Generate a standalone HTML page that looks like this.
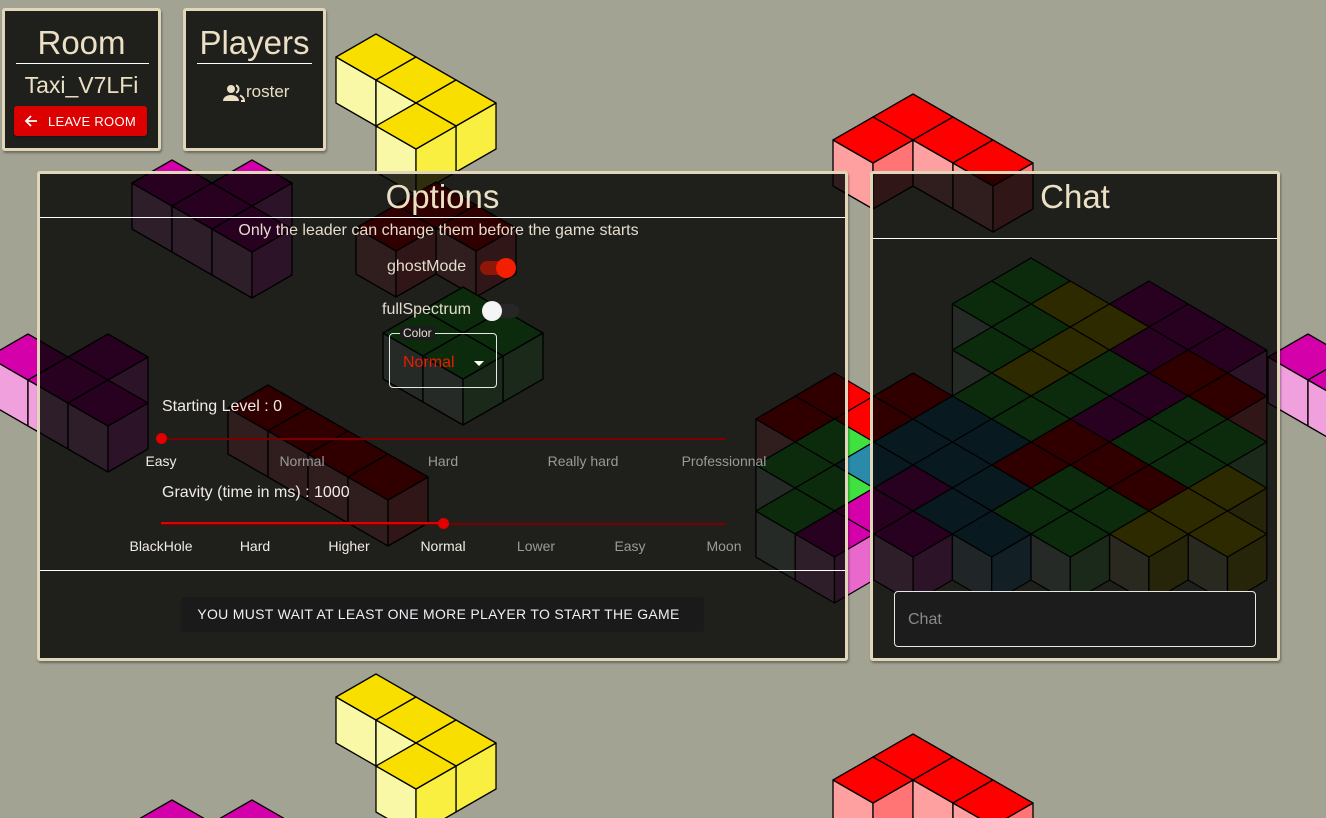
<!DOCTYPE html>
<html><head><meta charset="utf-8">
<style>
html,body{margin:0;padding:0;width:1326px;height:818px;overflow:hidden;background:#a3a393;font-family:"Liberation Sans",sans-serif;position:relative}
#bg{position:absolute;left:0;top:0;display:block}
.panel{position:absolute;box-sizing:border-box;background:rgba(0,0,0,0.81);border:3px solid #e1d5ba;border-radius:3px;box-shadow:1px 2px 2px rgba(0,0,0,.35);overflow:hidden}
.abs{position:absolute;white-space:nowrap}
.title{color:#ebdfc4;font-size:33px;text-align:center;left:0;right:0}
.hr{position:absolute;height:1px;background:#fff}
.lbl{color:#e4dccc;font-size:16px}
.mk{position:absolute;font-size:14px;transform:translateX(-50%);white-space:nowrap}
</style></head><body>
<svg id="bg" width="1326" height="818" xmlns="http://www.w3.org/2000/svg"></svg>

<!-- Room -->
<div class="panel" style="left:2px;top:8px;width:159px;height:143px">
  <div class="abs title" style="top:13px">Room</div>
  <div class="hr" style="left:11px;width:133px;top:52px"></div>
  <div class="abs" style="left:0;right:0;text-align:center;top:61px;font-size:23px;color:#ebdfc4">Taxi_V7LFi</div>
  <div class="abs" style="left:9px;top:95px;width:133px;height:30px;background:#dd0000;border-radius:3px;box-shadow:0 1px 2px rgba(0,0,0,.3)">
    <svg class="abs" style="left:10px;top:8px" width="14" height="14" viewBox="0 0 14 14"><path d="M13 7H2M7 2L2 7l5 5" stroke="#fff" stroke-width="1.8" fill="none"/></svg>
    <span class="abs" style="left:34px;top:8px;font-size:13px;color:#fff;letter-spacing:.3px">LEAVE ROOM</span>
  </div>
</div>

<!-- Players -->
<div class="panel" style="left:183px;top:8px;width:143px;height:143px">
  <div class="abs title" style="top:13px">Players</div>
  <div class="hr" style="left:11px;width:115px;top:52px"></div>
  <svg class="abs" style="left:36px;top:72px" width="24" height="20" viewBox="0 0 24 20"><circle cx="9" cy="6" r="4" fill="#ebdfc4"/><path d="M1 18c0-4 4-6 8-6s8 2 8 6z" fill="#ebdfc4"/><path d="M14 2.3a4 4 0 0 1 0 7.4M18 12.5c2.5 1 4 2.6 4 5.5h-3" stroke="#ebdfc4" stroke-width="2" fill="none"/></svg>
  <span class="abs" style="left:60px;top:71px;font-size:17px;color:#ebdfc4">roster</span>
</div>

<!-- Options -->
<div class="panel" style="left:37px;top:171px;width:811px;height:490px">
  <div class="abs title" style="top:4px">Options</div>
  <div class="hr" style="left:0;right:0;top:43px"></div>
  <div class="abs lbl" style="left:-8px;right:0;text-align:center;top:48px">Only the leader can change them before the game starts</div>
  <span class="abs lbl" style="left:347px;top:84px">ghostMode</span>
  <div class="abs" style="left:440px;top:87px;width:34px;height:14px;border-radius:7px;background:#8f1608"></div>
  <div class="abs" style="left:456px;top:84px;width:20px;height:20px;border-radius:50%;background:#f41e00"></div>
  <span class="abs lbl" style="left:342px;top:127px">fullSpectrum</span>
  <div class="abs" style="left:445px;top:130px;width:34px;height:14px;border-radius:7px;background:#262626"></div>
  <div class="abs" style="left:442px;top:127px;width:20px;height:20px;border-radius:50%;background:#f5f5f5"></div>
  <div class="abs" style="left:349px;top:159px;width:108px;height:55px;box-sizing:border-box;border:1px solid #e8e8e8;border-radius:4px"></div>
  <span class="abs" style="left:360px;top:152px;font-size:12px;color:#e8e0d0">
    <span style="background:rgb(28,28,28);padding:0 3px">Color</span></span>
  <span class="abs" style="left:363px;top:180px;font-size:16px;color:#e81c00">Normal</span>
  <div class="abs" style="left:434px;top:187px;width:0;height:0;border-left:5px solid transparent;border-right:5px solid transparent;border-top:5px solid #fff"></div>

  <span class="abs lbl" style="left:122px;top:224px;color:#f0ece4">Starting Level : 0</span>
  <div class="abs" style="left:121px;top:264px;width:565px;height:2px;background:#7a0000"></div>
  <div class="abs" style="left:116px;top:259px;width:11px;height:11px;border-radius:50%;background:#e00000"></div>
  <div class="mk" style="left:121px;top:279px;color:#f0ece4">Easy</div>
  <div class="mk" style="left:262px;top:279px;color:#9a9a9a">Normal</div>
  <div class="mk" style="left:403px;top:279px;color:#9a9a9a">Hard</div>
  <div class="mk" style="left:543px;top:279px;color:#9a9a9a">Really hard</div>
  <div class="mk" style="left:684px;top:279px;color:#9a9a9a">Professionnal</div>

  <span class="abs lbl" style="left:122px;top:310px;color:#f0ece4">Gravity (time in ms) : 1000</span>
  <div class="abs" style="left:121px;top:349px;width:565px;height:2px;background:#7a0000"></div>
  <div class="abs" style="left:121px;top:348px;width:282px;height:2px;background:#e00000"></div>
  <div class="abs" style="left:398px;top:344px;width:11px;height:11px;border-radius:50%;background:#e00000"></div>
  <div class="mk" style="left:121px;top:364px;color:#f0ece4">BlackHole</div>
  <div class="mk" style="left:215px;top:364px;color:#f0ece4">Hard</div>
  <div class="mk" style="left:309px;top:364px;color:#f0ece4">Higher</div>
  <div class="mk" style="left:403px;top:364px;color:#f0ece4">Normal</div>
  <div class="mk" style="left:496px;top:364px;color:#9a9a9a">Lower</div>
  <div class="mk" style="left:590px;top:364px;color:#9a9a9a">Easy</div>
  <div class="mk" style="left:684px;top:364px;color:#9a9a9a">Moon</div>

  <div class="hr" style="left:0;right:0;top:396px"></div>
  <div class="abs" style="left:141px;top:423px;width:523px;height:35px;background:#1a1a1a;border-radius:3px"></div>
  <span class="abs" style="left:137px;width:523px;text-align:center;top:432px;font-size:14px;color:#eef0f4;letter-spacing:.3px">YOU MUST WAIT AT LEAST ONE MORE PLAYER TO START THE GAME</span>
</div>

<!-- Chat -->
<div class="panel" style="left:870px;top:171px;width:410px;height:490px">
  <div class="abs title" style="top:4px">Chat</div>
  <div class="hr" style="left:0;right:0;top:64px"></div>
  <div class="abs" style="left:21px;top:417px;width:362px;height:56px;box-sizing:border-box;border:1px solid #e8e8e8;border-radius:4px;background:#1c1c1c"></div>
  <span class="abs" style="left:35px;top:437px;font-size:16px;color:#8a8a8a">Chat</span>
</div>

<script>
var C={
 Y:['#f8df00','#f8f8a6','#f8ef40'],
 R:['#ff0000','#ffa0a0','#ff7575'],
 M:['#d400aa','#f0a0dc','#e868cc'],
 G:['#40e040','#c8dcc8','#88d888'],
 B:['#2a8aaa','#a8c8d4','#60a8c8'],
 O:['#f0e000','#d8d8a8','#c8c030']
};
var s='';
function poly(p,f){s+='<polygon points="'+p.join(' ')+'" fill="'+f+'" stroke="#000" stroke-width="1.3" stroke-linejoin="round"/>';}
function cube(x,y,col,w,h,faces){w=w||40;h=h||23;var c=C[col];var d=2*h;
 if(!faces||faces.L) poly([(x-w)+','+(y+h),x+','+(y+2*h),x+','+(y+2*h+d),(x-w)+','+(y+h+d)],c[1]);
 if(!faces||faces.R) poly([x+','+(y+2*h),(x+w)+','+(y+h),(x+w)+','+(y+h+d),x+','+(y+2*h+d)],c[2]);
 poly([x+','+y,(x+w)+','+(y+h),x+','+(y+2*h),(x-w)+','+(y+h)],c[0]);}
function piece(ox,oy,cells,col){cells.slice().sort(function(a,b){return (a[0]+a[1])-(b[0]+b[1]);}).forEach(function(q){cube(ox+40*(q[0]-q[1]),oy+23*(q[0]+q[1]),col);});}
[0,640].forEach(function(dy){piece(376,34+dy,[[0,0],[1,0],[2,0],[2,1]],'Y');});
[0,640].forEach(function(dy){piece(913,94+dy,[[0,0],[0,1],[1,0],[2,0]],'R');});
[0,640].forEach(function(dy){piece(212,183+dy,[[-1,0],[0,-1],[0,0],[1,0]],'M');});
piece(68,357,[[-1,0],[0,-1],[0,0],[1,0]],'M');
piece(1348,357,[[-1,0],[0,-1],[0,0],[1,0]],'M');
piece(436,182,[[0,0],[1,0],[0,1]],'R');
piece(463,287,[[0,0],[1,0],[0,1],[1,1]],'G');
piece(268,385,[[0,0],[1,0],[2,0],[3,0]],'R');
var rows={0:{0:'G'},1:{'-1':'G',1:'O',3:'M'},2:{0:'G',2:'O',4:'M'},3:{'-1':'G',1:'O',3:'M',5:'M'},
4:{0:'O',2:'G',4:'R'},5:{'-5':'R','-3':'R','-1':'G',1:'G',3:'M',5:'R'},
6:{'-6':'R','-4':'R','-2':'B',0:'G',2:'M',4:'G'},7:{'-5':'G','-3':'B','-1':'B',1:'R',3:'G',5:'G'},
8:{'-6':'G','-4':'B','-2':'B',0:'R',2:'R',4:'G'},9:{'-5':'G','-3':'M','-1':'B',1:'G',3:'R',5:'O'},
10:{'-6':'G','-4':'M','-2':'B',0:'G',2:'G',4:'O'},11:{'-5':'M','-3':'M','-1':'B',1:'G',3:'O',5:'O'}};
for(var r=0;r<=11;r++){for(var c=-6;c<=5;c++){var col=rows[r][c];if(!col)continue;
 var nx=rows[r+1]||{};var f={L:!nx[c-1],R:!nx[c+1]};
 cube(1031+39.3*c,258+23*r,col,39.3,23,f);}}
document.getElementById('bg').innerHTML=s;
</script>
</body></html>
